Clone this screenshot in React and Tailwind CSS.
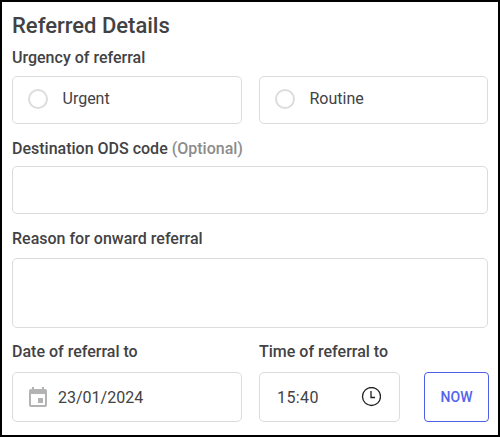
import React, { useState } from 'react';

const CalendarIcon = () => (
  <svg viewBox="0 0 18 20" className="w-[18px] h-5 shrink-0" fill="#b3b3b3">
    <path fillRule="evenodd" d="M3 0h2v2h8V0h2v2h1a2 2 0 0 1 2 2v14a2 2 0 0 1-2 2H2a2 2 0 0 1-2-2V4a2 2 0 0 1 2-2h1zM2 7v11h14V7zM9 11h5v5H9z" />
  </svg>
);

const ClockIcon = () => (
  <svg viewBox="0 0 20 20" className="w-5 h-5 shrink-0" fill="none" stroke="#1f1f1f">
    <circle cx="10.5" cy="9.5" r="9" strokeWidth="1.3" />
    <path d="M10 4v6.5h4" strokeWidth="1.3" />
  </svg>
);

const Label = ({ children, className = '' }) => (
  <div className={`h-5 leading-5 font-medium whitespace-nowrap ${className}`}>{children}</div>
);

const App = () => {
  const [urgency, setUrgency] = useState('');
  const [date, setDate] = useState('23/01/2024');
  const [time, setTime] = useState('15:40');

  const setNow = () => {
    const now = new Date();
    setDate(now.toLocaleDateString('en-GB'));
    setTime(now.toTimeString().slice(0, 5));
  };

  return (
    <div className="w-[500px] h-[437px] border-2 border-black bg-white pl-2.5 pt-2.5 text-base text-[#424244] font-['Roboto',sans-serif] overflow-hidden">
      <h2 className="h-7 leading-7 text-[22px] font-medium whitespace-nowrap">Referred Details</h2>

      {/* Urgency */}
      <Label className="mt-2">Urgency of referral</Label>
      <div className="flex gap-[17px] mt-2">
        {['Urgent', 'Routine'].map((option) => (
          <label key={option} className="flex items-center w-[230px] last:w-[229px] h-12 pl-[15px] border border-[#dcdcdc] rounded-[5px]">
            <input
              type="radio"
              name="urgency"
              checked={urgency === option}
              onChange={() => setUrgency(option)}
              className="appearance-none w-5 h-5 mt-[-2px] border-2 border-[#dcdcdc] rounded-full checked:border-[#4a5ae8]"
            />
            <span className="ml-[14.5px] mt-[-3px] leading-5">{option}</span>
          </label>
        ))}
      </div>

      <Label className="mt-[15px]">
        Destination ODS code <span className="text-[#8c8c8c]">(Optional)</span>
      </Label>
      <input type="text" className="block w-[476px] h-12 mt-[7px] px-4 border border-[#dcdcdc] rounded-[5px] outline-none" />

      <Label className="mt-[15px]">Reason for onward referral</Label>
      <textarea className="block w-[476px] h-[70px] mt-[9px] px-4 py-2 border border-[#dcdcdc] rounded-[5px] outline-none resize-none" />

      {/* Date and time */}
      <div className="flex items-end mt-[14px]">
        <div className="w-[230px]">
          <Label>Date of referral to</Label>
          <div className="flex items-center h-[50px] mt-[10px] pl-4 border border-[#dcdcdc] rounded-[5px]">
            <CalendarIcon />
            <input value={date} onChange={(e) => setDate(e.target.value)} className="w-40 ml-[11px] mt-0.5 outline-none" />
          </div>
        </div>
        <div className="w-[141px] ml-[17px]">
          <Label>Time of referral to</Label>
          <div className="flex items-center h-[50px] mt-[10px] pl-[17px] border border-[#dcdcdc] rounded-[5px]">
            <input value={time} onChange={(e) => setTime(e.target.value)} className="w-[84px] mt-0.5 tracking-[0.4px] outline-none" />
            <ClockIcon />
          </div>
        </div>
        <button type="button" onClick={setNow} className="w-[65px] h-[50px] ml-6 border border-[#4f5fe8] rounded-[4px] text-sm font-medium text-[#5263ec]">
          NOW
        </button>
      </div>
    </div>
  );
};

export default App;
